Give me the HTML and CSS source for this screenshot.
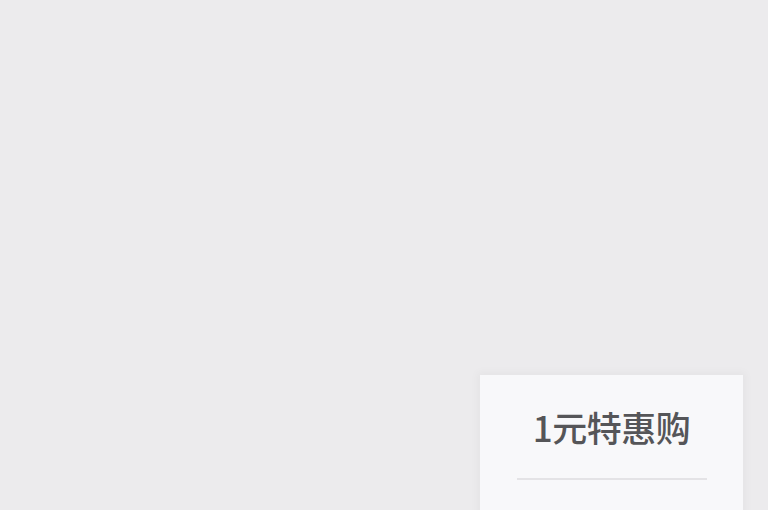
FILE: index.html
```html
<!DOCTYPE html>
<html lang="zh">
<head>
<meta charset="utf-8">
<link rel="stylesheet" href="styles.css">
</head>
<body>
<div class="page">
  <div class="card">
    <div class="title">1元特惠购</div>
    <div class="divider"></div>
  </div>
</div>
</body>
</html>
```
FILE: styles.css
```css
html, body {
  margin: 0;
  padding: 0;
  background: #ecebed;
}
.page {
  width: 768px;
  height: 510px;
  overflow: hidden;
  box-sizing: border-box;
  padding-top: 375px;
  padding-right: 25px;
  display: flex;
  justify-content: flex-end;
  align-items: flex-start;
  font-family: "Noto Sans CJK SC", "Noto Sans", sans-serif;
}
.card {
  width: 263px;
  height: 200px;
  flex: none;
  background: #f8f8fa;
  box-shadow: 0 0 8px 3px rgba(0, 0, 0, 0.03);
  display: flex;
  flex-direction: column;
  align-items: center;
  padding-top: 29px;
  box-sizing: border-box;
}
.title {
  font-size: 35px;
  line-height: 46px;
  font-weight: 500;
  color: #555558;
  letter-spacing: -0.5px;
}
.divider {
  width: 190px;
  height: 2px;
  background: #e4e3e6;
  margin-top: 28px;
}
```
